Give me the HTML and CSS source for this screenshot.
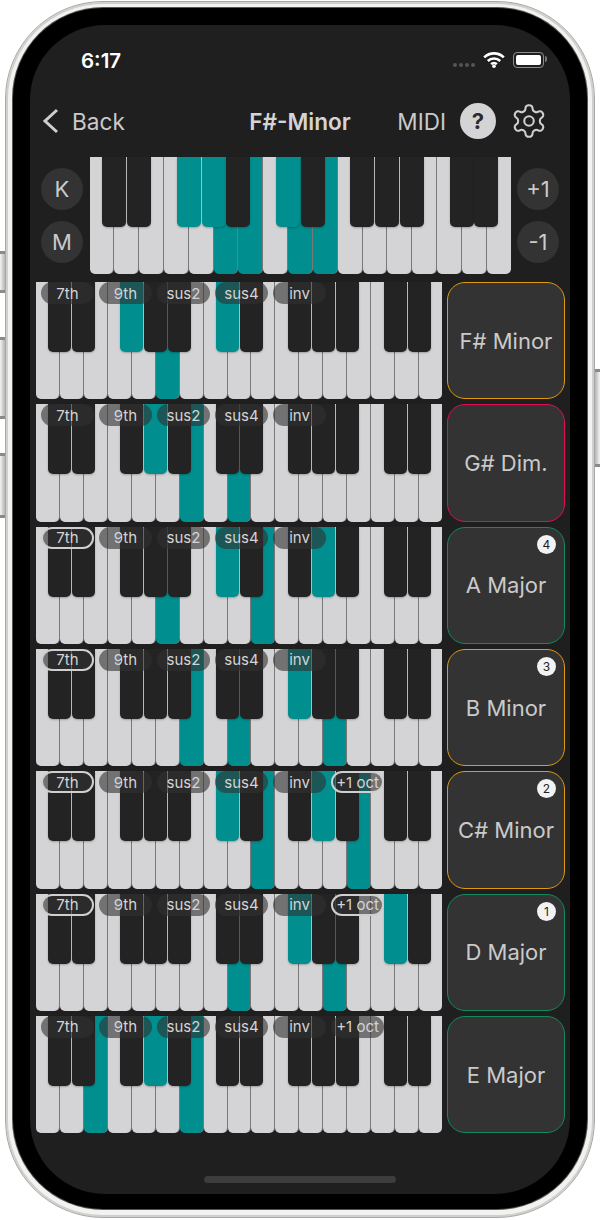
FILE: index.html
```html
<!DOCTYPE html>
<html lang="en">

<head>
    <meta charset="UTF-8">
    <meta name="viewport" content="width=device-width, initial-scale=1.0">
    <title>F#-Minor</title>
    <link rel="stylesheet" href="styles.css">
</head>

<body>

    <div class="phone">
        <span class="side-btn left-1"></span>
        <span class="side-btn left-2"></span>
        <span class="side-btn left-3"></span>
        <span class="side-btn right-1"></span>

        <div class="bezel">
            <div class="screen">

                <div class="status-bar">
                    <span class="time">6:17</span>
                    <div class="status-icons">
                        <div class="signal"><i></i><i></i><i></i><i></i></div>
                        <svg class="wifi" viewBox="0 0 22 17" width="22" height="17">
                            <path d="M1.2 6.4a14 14 0 0 1 19.6 0" />
                            <path d="M4.8 10a8.9 8.9 0 0 1 12.4 0" />
                            <path d="M8.2 13.2a4 4 0 0 1 5.6 0" />
                            <circle cx="11" cy="15.2" r="1.8" />
                        </svg>
                        <div class="battery"><div class="battery-fill"></div></div>
                    </div>
                </div>

                <div class="nav">
                    <div class="nav-back">
                        <svg class="chevron" viewBox="0 0 17 26" width="17" height="26">
                            <path d="M15 2 3 13l12 11" />
                        </svg>
                        <span>Back</span>
                    </div>
                    <div class="nav-title">F#-Minor</div>
                    <div class="nav-right">
                        <span class="midi">MIDI</span>
                        <div class="help">?</div>
                        <svg class="gear" viewBox="0 0 24 24" width="38" height="38">
                            <path d="M12.22 2h-.44a2 2 0 0 0-2 2v.18a2 2 0 0 1-1 1.73l-.43.25a2 2 0 0 1-2 0l-.15-.08a2 2 0 0 0-2.73.73l-.22.38a2 2 0 0 0 .73 2.73l.15.1a2 2 0 0 1 1 1.72v.51a2 2 0 0 1-1 1.74l-.15.09a2 2 0 0 0-.73 2.73l.22.38a2 2 0 0 0 2.73.73l.15-.08a2 2 0 0 1 2 0l.43.25a2 2 0 0 1 1 1.73V20a2 2 0 0 0 2 2h.44a2 2 0 0 0 2-2v-.18a2 2 0 0 1 1-1.73l.43-.25a2 2 0 0 1 2 0l.15.08a2 2 0 0 0 2.73-.73l.22-.39a2 2 0 0 0-.73-2.73l-.15-.08a2 2 0 0 1-1-1.74v-.5a2 2 0 0 1 1-1.74l.15-.09a2 2 0 0 0 .73-2.73l-.22-.38a2 2 0 0 0-2.73-.73l-.15.08a2 2 0 0 1-2 0l-.43-.25a2 2 0 0 1-1-1.73V4a2 2 0 0 0-2-2z" />
                            <circle cx="12" cy="12" r="3" />
                        </svg>
                    </div>
                </div>

                <div class="scale-row">
                    <div class="round-btns">
                        <div class="round-btn">K</div>
                        <div class="round-btn">M</div>
                    </div>
                    <div class="keys keys-top" id="scaleKeys"></div>
                    <div class="round-btns">
                        <div class="round-btn">+1</div>
                        <div class="round-btn">-1</div>
                    </div>
                </div>

                <div class="chords" id="chordRows"></div> <!-- filled by script.js -->

                <div class="home-bar"></div>
            </div>
        </div>
    </div>

    <script src="script.js"></script>

</body>

</html>
```

FILE: styles.css
```css
* {
    box-sizing: border-box;
}

html, body {
    margin: 0;
    height: 1220px;
    overflow: hidden;
    background-color: #fff;
}

body {
    font-family: Inter, "Liberation Sans", sans-serif;
    color: #cacaca;
}

/* device frame */
.phone {
    position: relative;
    width: 590px;
    height: 1217px;
    margin: 1px 5px 0;
    padding: 6px 7px 8px;
    border: 1px solid #a8a8a8;
    border-radius: 98px;
    background-color: #f2f2f0;
    box-shadow: inset 0 0 0 2px #cfcfcb;
}

.side-btn {
    position: absolute;
    width: 5px;
    border-top: 3px solid #8a8a8a;
    border-bottom: 3px solid #8a8a8a;
    background: linear-gradient(to right, #f4f4f4, #b4b4b4);
}

.left-1 { left: -6px; top: 249px; height: 42px; }
.left-2 { left: -6px; top: 335px; height: 82px; }
.left-3 { left: -6px; top: 451px; height: 65px; }

.right-1 {
    right: -6px;
    top: 367px;
    height: 98px;
    background: linear-gradient(to left, #f4f4f4, #b4b4b4);
}

.bezel {
    height: 100%;
    padding: 17px 17px 15px;
    border-radius: 90px;
    background-color: #000;
    box-shadow: 0 0 0 1px #555;
}

.screen {
    position: relative;
    height: 100%;
    border-radius: 75px;
    background-color: #1f1f1f;
}

/* status bar */
.status-bar {
    display: flex;
    justify-content: space-between;
    align-items: center;
    height: 70px;
    padding: 0 26px 0 51px;
}

.time {
    font-size: 20.5px;
    font-weight: 600;
    color: #fff;
}

.status-icons {
    display: flex;
    align-items: center;
    gap: 8px;
}

.signal {
    display: flex;
    gap: 2px;
    margin-top: 10px;
}

.signal i {
    width: 4px;
    height: 4px;
    border-radius: 50%;
    background-color: #555;
}

.wifi {
    margin-bottom: 1px;
}

.wifi path {
    fill: none;
    stroke: #fff;
    stroke-width: 2.6;
}

.wifi circle {
    fill: #fff;
}

.battery {
    position: relative;
    width: 31px;
    height: 16px;
    padding: 2px;
    border: 1px solid #8c8c8c;
    border-radius: 4px;
}

.battery::after {
    content: "";
    position: absolute;
    top: 3px;
    right: -4px;
    width: 2px;
    height: 6px;
    border-radius: 0 2px 2px 0;
    background-color: #777;
}

.battery-fill {
    height: 100%;
    border-radius: 2px;
    background-color: #fff;
}

/* nav */
.nav {
    display: grid;
    grid-template-columns: 1fr auto 1fr;
    align-items: center;
    height: 52px;
    padding: 0 25px;
}

.nav-back {
    display: flex;
    align-items: center;
    gap: 13px;
    margin-left: -13px;
    font-size: 22.6px;
}

.chevron path {
    fill: none;
    stroke: #cfcfcf;
    stroke-width: 3;
}

.nav-title {
    font-size: 22.6px;
    font-weight: 600;
    color: #d4d4d6;
}

.nav-right {
    display: flex;
    justify-content: flex-end;
    align-items: center;
    font-size: 22.5px;
}

.help {
    display: flex;
    justify-content: center;
    align-items: center;
    width: 36px;
    height: 36px;
    margin: 0 14px;
    border-radius: 50%;
    background-color: #d4d4d6;
    color: #2b2b2b;
    font-size: 22px;
    font-weight: 700;
}

.gear {
    margin-right: -3px;
}

.gear path, .gear circle {
    fill: none;
    stroke: #cfcfcf;
    stroke-width: 1.3;
}

/* top keyboard with round buttons */
.scale-row {
    display: flex;
    justify-content: space-between;
    align-items: center;
    height: 117px;
    margin-top: 10px;
    padding: 0 11px;
}

.round-btns {
    display: flex;
    flex-direction: column;
    gap: 11px;
}

.round-btn {
    display: flex;
    justify-content: center;
    align-items: center;
    width: 42px;
    height: 42px;
    border-radius: 50%;
    background-color: #333;
    font-size: 22px;
}

/* keyboards */
.keys {
    --pitch: 23.94px;
    --black-w: 23px;
    position: relative;
    display: grid;
    grid-template-columns: repeat(17, 1fr);
    gap: 1px;
    flex: none;
    width: 406px;
    height: 100%;
}

.keys-top {
    --pitch: 24.8px;
    --black-w: 24px;
    width: 421px;
}

.white {
    border-radius: 0 0 5px 5px;
    background-color: #d4d4d6;
    box-shadow: 1px 0 0 #78787a;
}

.white:nth-child(17) {
    box-shadow: none;
}

.black {
    position: absolute;
    top: 0;
    left: calc(var(--i) * var(--pitch) - var(--black-w) / 2);
    width: var(--black-w);
    height: 70px;
    border-radius: 0 0 5px 5px;
    background-color: #232323;
    box-shadow: 0 1px 2px rgba(0, 0, 0, 0.25);
}

.white.on, .black.on {
    background-color: #018e8e;
}

/* chord rows */
.chords {
    display: flex;
    flex-direction: column;
    gap: 5px;
    margin-top: 8px;
    padding: 0 5px 0 6px;
}

.chord-row {
    display: flex;
    justify-content: space-between;
    height: 117.33px;
}

.pills {
    position: absolute;
    top: 0;
    left: 5px;
    display: flex;
    gap: 5px;
}

.pill {
    display: flex;
    justify-content: center;
    align-items: center;
    width: 53px;
    height: 22px;
    border-radius: 11px;
    background-color: rgba(48, 48, 48, 0.6);
    color: #d4d4d6;
    font-size: 15px;
}

.pill.active {
    border: 2px solid #cfcfcf;
}

.chord-btn {
    position: relative;
    display: flex;
    justify-content: center;
    align-items: center;
    width: 118px;
    border: 1px solid #888;
    border-radius: 18px;
    background-color: #333;
    font-size: 22px;
}

.chord-btn.minor { border-color: #e09a10; }
.chord-btn.dim { border-color: #e01050; }
.chord-btn.major { border-color: #128a5c; }

.badge {
    position: absolute;
    top: 7px;
    right: 8px;
    display: flex;
    justify-content: center;
    align-items: center;
    width: 19px;
    height: 19px;
    border-radius: 50%;
    background-color: #f2f2f2;
    color: #222;
    font-size: 12px;
}

.home-bar {
    position: absolute;
    left: 174px;
    bottom: 11px;
    width: 192px;
    height: 7px;
    border-radius: 4px;
    background-color: #3d3d3d;
}
```

FILE: script.js
```js
// white keys that have a black key on their left edge
const blackSlots = [1, 2, 4, 5, 6, 8, 9, 11, 12, 13, 15, 16];

const chords = [
    { name: "F# Minor", type: "minor", whites: [5], blacks: [4, 8], active: [] },
    { name: "G# Dim.", type: "dim", whites: [6, 8], blacks: [5], active: [] },
    { name: "A Major", type: "major", whites: [5, 9], blacks: [8, 12], active: ["7th"], badge: 4 },
    { name: "B Minor", type: "minor", whites: [6, 8, 12], blacks: [11], active: ["7th"], badge: 3 },
    { name: "C# Minor", type: "minor", whites: [9, 13], blacks: [8, 12], active: ["7th", "+1 oct"], badge: 2, oct: true },
    { name: "D Major", type: "major", whites: [8, 12], blacks: [11, 15], active: ["7th", "+1 oct"], badge: 1, oct: true },
    { name: "E Major", type: "major", whites: [2, 6], blacks: [5], active: [], oct: true }
];

function buildKeys(container, whites, blacks) {
    for (let i = 0; i < 17; i++) {
        let key = document.createElement('div');
        key.className = whites.includes(i) ? 'white on' : 'white';
        container.appendChild(key);
    }
    blackSlots.forEach(slot => {
        let key = document.createElement('div');
        key.className = blacks.includes(slot) ? 'black on' : 'black';
        key.style.setProperty('--i', slot);
        container.appendChild(key);
    });
}

function buildRow(chord) {
    let row = document.createElement('div');
    row.className = 'chord-row';

    let keys = document.createElement('div');
    keys.className = 'keys';
    buildKeys(keys, chord.whites, chord.blacks);

    let pills = document.createElement('div');
    pills.className = 'pills';
    let labels = ["7th", "9th", "sus2", "sus4", "inv"];
    if (chord.oct) labels.push("+1 oct");
    labels.forEach(label => {
        let pill = document.createElement('div');
        pill.className = chord.active.includes(label) ? 'pill active' : 'pill';
        pill.innerText = label;
        pills.appendChild(pill);
    });
    keys.appendChild(pills);

    let btn = document.createElement('div');
    btn.className = 'chord-btn ' + chord.type;
    btn.innerText = chord.name;
    if (chord.badge) {
        let badge = document.createElement('span');
        badge.className = 'badge';
        badge.innerText = chord.badge;
        btn.appendChild(badge);
    }

    row.appendChild(keys);
    row.appendChild(btn);
    return row;
}

buildKeys(document.getElementById('scaleKeys'), [5, 6, 8, 9], [4, 5, 8]);

let rows = document.getElementById('chordRows');
chords.forEach(chord => rows.appendChild(buildRow(chord)));
```
